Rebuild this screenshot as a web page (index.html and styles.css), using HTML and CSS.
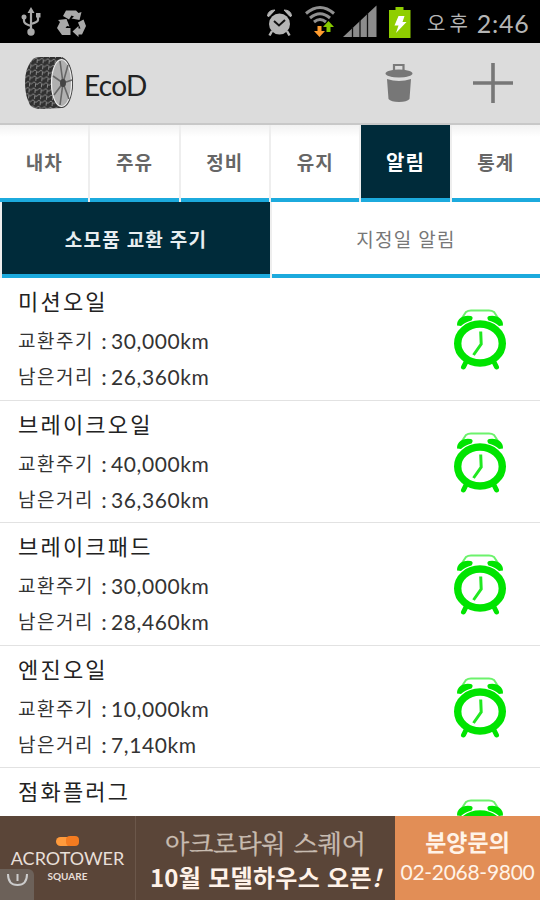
FILE: index.html
```html
<!DOCTYPE html>
<html lang="ko">
<head>
  <meta charset="UTF-8">
  <title>EcoD</title>
  <link rel="stylesheet" href="styles.css">
</head>
<body>

  <svg width="0" height="0" class="defs">
    <symbol id="alarm" viewBox="0 0 54 62">
      <path d="M9 9 L13 3 Q15 1.500 18 1.500 H36 Q39 1.500 41 3 L45 9" fill="none" stroke="#6cf26c" stroke-width="2"/>
      <path d="M4 16.500 Q3.500 12 8 8.500 Q12 6 18 7 Q21 8 18.500 11.500 Q12 13 8 17 Z M50 16.500 Q50.500 12 46 8.500 Q42 6 36 7 Q33 8 35.500 11.500 Q42 13 46 17 Z" fill="#00e400"/>
      <ellipse cx="27" cy="34.500" rx="22.300" ry="19.500" fill="none" stroke="#00e400" stroke-width="7.400"/>
      <path d="M13 53 L10.500 58 M41 53 L43.500 58" stroke="#00e400" stroke-width="5" stroke-linecap="round"/>
      <path d="M27.700 22.500 L28.200 35 L20.500 46" fill="none" stroke="#20e820" stroke-width="3"/>
    </symbol>
  </svg>

  <div class="phone">
    <div class="status">
      <svg class="left-icons" width="90" height="43" viewBox="0 0 90 43">
        <g fill="none" stroke="#aaa" stroke-width="2.200">
          <path d="M31 11 V33 M24 18 V21 Q24 24 31 26 M38 16 V20 Q38 22 31 24"/>
        </g>
        <path d="M31 7 L34.500 13 H27.500 Z M36 13 h4.500 v4.500 h-4.500 Z" fill="#aaa"/>
        <circle cx="24" cy="17" r="2.500" fill="#aaa"/>
        <circle cx="31" cy="32" r="3.700" fill="#aaa"/>
        <path d="M66 10.500 H76 L78.500 13 L81.500 12 L79.500 20 L71.500 18.500 L74 16.500 L71.500 15.500 L69 19.500 L63 16 Z" fill="#aaa"/>
        <path d="M58 20 L66.500 19 L69.500 26.500 L67 26 L65.500 28 H70.500 V35 H62 L57 28 L60 22 Z" fill="#aaa"/>
        <path d="M78 22.500 L83.500 19.500 L86 26 L82 34.500 H78.500 V37 L72.500 31.500 L78.500 26 V28.500 H80.500 Z" fill="#aaa"/>
      </svg>
      <svg class="right-icons" width="152" height="43" viewBox="260 0 152 43">
        <g stroke="#b5b5b5" fill="#b5b5b5">
          <circle cx="279.500" cy="24" r="10.500" stroke="none"/>
          <path d="M272 31 L269.500 35.500 M287 31 L289.500 35.500" stroke-width="2.500"/>
          <path d="M267.500 16 Q268 10 275 10 L269 16.500 Z M291.500 16 Q291 10 284 10 L290 16.500 Z" stroke-width="1"/>
          <path d="M274 21 L279 25.500 L285 20" stroke="#111" stroke-width="2" fill="none"/>
        </g>
        <g fill="none" stroke="#909090" stroke-width="3">
          <path d="M306 13.500 Q320 1.500 334 13.500"/>
          <path d="M310 18 Q320 9.500 330 18"/>
          <path d="M314 22 Q320 17 326 22"/>
        </g>
        <path d="M317.500 26 h4 v5 h3.500 l-5.500 6 l-5.500 -6 h3.500 Z" fill="#ff9c2e"/>
        <path d="M326.500 32 h4 v-5 h3.500 l-5.500 -6 l-5.500 6 h3.500 Z" fill="#86c800"/>
        <path d="M343 37 L376.500 5.500 V37 Z" fill="#8c8c8c"/>
        <path d="M352.500 27 V37 M360 20 V37 M367.500 13 V37" stroke="#111" stroke-width="1.300"/>
        <path d="M389 10 H395.500 V7 H403.500 V10 H410.500 V38 H389 Z" fill="#8fce00"/>
        <path d="M398.500 16 H404.500 L402.500 22 H406.500 L396 33 L398.500 25.500 H394.500 Z" fill="#fff"/>
      </svg>
      <div class="clock"><span class="ampm">오후</span><span class="time">2:46</span></div>
    </div>

    <div class="header">
      <svg class="tire" width="50" height="54" viewBox="0 0 50 54">
        <defs>
          <pattern id="tread" width="6" height="6" patternUnits="userSpaceOnUse" patternTransform="rotate(4)">
            <rect width="6" height="6" fill="#303030"/>
            <path d="M0 1 L3 3.500 L6 1 M1.500 3 V6" fill="none" stroke="#8a8a8a" stroke-width="1"/>
          </pattern>
        </defs>
        <path d="M8 4 Q10 1 17 1 H38 Q48 6 49 27 Q48 47 38 52 L17 53 Q9 53 6 49 Q1 40 1 27 Q1 12 8 4 Z" fill="url(#tread)"/>
        <ellipse cx="38" cy="27" rx="11" ry="25" fill="#444"/>
        <ellipse cx="37.500" cy="27" rx="10" ry="23.500" fill="#b0b0b0" stroke="#eee" stroke-width="1.200"/>
        <path d="M39 27 L36 5 M39 27 L44 9 M39 27 L48 24 M39 27 L45 43 M39 27 L36 49 M39 27 L30 39 M39 27 L29 20" stroke="#666" stroke-width="1.600"/>
        <ellipse cx="39" cy="27" rx="3" ry="4" fill="#444"/>
      </svg>
      <h1>EcoD</h1>
      <svg class="trash" width="28" height="40" viewBox="0 0 28 40">
        <path d="M9 7 V2 H18.500 V7" fill="none" stroke="#7a7a7a" stroke-width="2.200"/>
        <ellipse cx="14" cy="10.500" rx="13.500" ry="4" fill="#777"/>
        <path d="M2 16 Q14 20 26 16 L24.500 36 Q22 39 14 39 Q6 39 3.500 36 Z" fill="#777"/>
      </svg>
      <svg class="plus" width="40" height="40" viewBox="0 0 40 40">
        <path d="M20 0 V40 M0 20 H40" stroke="#777" stroke-width="3.600"/>
      </svg>
    </div>

    <div class="tabs">
      <div class="tab">내차</div>
      <div class="tab">주유</div>
      <div class="tab">정비</div>
      <div class="tab">유지</div>
      <div class="tab active">알림</div>
      <div class="tab">통계</div>
    </div>

    <div class="subtabs">
      <div class="subtab active">소모품 교환 주기</div>
      <div class="subtab">지정일 알림</div>
    </div>

    <div class="list">
      <div class="item">
        <div class="info">
          <h2>미션오일</h2>
          <p><span class="label">교환주기</span><span class="colon">:</span><span class="km">30,000km</span></p>
          <p><span class="label">남은거리</span><span class="colon">:</span><span class="km">26,360km</span></p>
        </div>
        <svg class="alarm"><use href="#alarm"/></svg>
      </div>
      <div class="item">
        <div class="info">
          <h2>브레이크오일</h2>
          <p><span class="label">교환주기</span><span class="colon">:</span><span class="km">40,000km</span></p>
          <p><span class="label">남은거리</span><span class="colon">:</span><span class="km">36,360km</span></p>
        </div>
        <svg class="alarm"><use href="#alarm"/></svg>
      </div>
      <div class="item">
        <div class="info">
          <h2>브레이크패드</h2>
          <p><span class="label">교환주기</span><span class="colon">:</span><span class="km">30,000km</span></p>
          <p><span class="label">남은거리</span><span class="colon">:</span><span class="km">28,460km</span></p>
        </div>
        <svg class="alarm"><use href="#alarm"/></svg>
      </div>
      <div class="item">
        <div class="info">
          <h2>엔진오일</h2>
          <p><span class="label">교환주기</span><span class="colon">:</span><span class="km">10,000km</span></p>
          <p><span class="label">남은거리</span><span class="colon">:</span><span class="km">7,140km</span></p>
        </div>
        <svg class="alarm"><use href="#alarm"/></svg>
      </div>
      <div class="item">
        <div class="info">
          <h2>점화플러그</h2>
        </div>
        <svg class="alarm"><use href="#alarm"/></svg>
      </div>
    </div>

    <div class="ad">
      <div class="brand">
        <svg width="24" height="11" viewBox="0 0 24 11">
          <rect x="0" y="1" width="15" height="9" rx="4.500" fill="#ff9a3c"/>
          <rect x="10" y="0" width="13" height="10" rx="4" fill="#f47b20"/>
        </svg>
        <div class="name">ACROTOWER</div>
        <div class="square">SQUARE</div>
        <div class="info-badge">
          <svg width="34" height="31" viewBox="0 0 34 31">
            <path d="M8 5 Q8 16 17.500 16 Q27 16 27 5" fill="none" stroke="#ccc" stroke-width="2"/>
            <path d="M17.500 5 V12" stroke="#ccc" stroke-width="2"/>
          </svg>
        </div>
      </div>
      <div class="copy">
        <div class="line1">아크로타워 스퀘어</div>
        <div class="line2">10월 모델하우스 오픈<i>!</i></div>
      </div>
      <div class="contact">
        <div class="ask">분양문의</div>
        <div class="tel">02-2068-9800</div>
      </div>
    </div>
  </div>

</body>
</html>
```
FILE: styles.css
```css
body {
  margin: 0;
  background: #fff;
  font-family: Lato, "Noto Sans CJK KR", sans-serif;
  color: #222;
}

.defs {
  display: block;
}

.phone {
  width: 540px;
  height: 900px;
  display: flex;
  flex-direction: column;
  overflow: hidden;
}

/* status bar */
.status {
  height: 43px;
  flex: none;
  display: flex;
  background: #000;
  color: #b5b5b5;
}

.right-icons {
  margin-left: 170px;
}

.clock {
  display: flex;
  align-items: center;
  margin-left: 15px;
  padding-top: 4px;
  white-space: nowrap;
}

.ampm {
  font-size: 20px;
  letter-spacing: 4px;
  line-height: 39px;
}

.time {
  margin-left: 5px;
  font-size: 25px;
  line-height: 39px;
  letter-spacing: 0.7px;
}

/* action bar */
.header {
  height: 82px;
  flex: none;
  box-sizing: border-box;
  display: flex;
  align-items: center;
  padding: 0 27px 0 24px;
  background: #dcdcdc;
  border-bottom: 2px solid #c8c8c8;
}

.header h1 {
  margin: 3px 0 0 10px;
  font-size: 28px;
  font-weight: normal;
  letter-spacing: -0.7px;
}

.trash {
  margin-left: auto;
  margin-right: 60px;
}

/* tabs */
.tabs,
.subtabs {
  display: flex;
  flex: none;
  gap: 2px;
  background: #eee;
}

.tabs {
  height: 77px;
}

.subtabs {
  height: 76px;
}

.tab,
.subtab {
  flex: 1;
  box-sizing: border-box;
  display: flex;
  align-items: center;
  justify-content: center;
  background: #fff;
  border-bottom: 4px solid #1caadd;
  white-space: nowrap;
}

.tab {
  font-size: 19px;
  font-weight: bold;
  color: #666;
  letter-spacing: 1px;
  background: linear-gradient(#f2f2f2, #fff 12px);
}

.subtab {
  font-size: 19px;
  letter-spacing: 1.2px;
  color: #777;
}

.tab.active {
  background: #002b3a;
  color: #fff;
  font-size: 20px;
}

.subtab.active {
  background: #002b3a;
  color: #e8eef0;
  font-weight: bold;
  margin-left: 2px;
}

/* list */
.list {
  flex: 1;
  min-height: 0;
  overflow: hidden;
}

.item {
  height: 122.600px;
  box-sizing: border-box;
  display: flex;
  justify-content: space-between;
  padding: 6px 33px 0 18px;
  border-bottom: 1px solid #e2e2e2;
}

.item h2 {
  margin: 0;
  font-size: 22px;
  line-height: 36px;
  font-weight: normal;
  letter-spacing: 2.200px;
}

.item p {
  margin: 0;
  display: flex;
  height: 36px;
  line-height: 36px;
  position: relative;
  top: 3px;
  color: #333;
}

.label {
  width: 79px;
  font-size: 19px;
  letter-spacing: 1.500px;
}

.colon {
  width: 14px;
  text-align: center;
  font-size: 22px;
}

.km {
  font-size: 21px;
  letter-spacing: 0.600px;
}

.alarm {
  width: 54px;
  height: 62px;
  margin-top: 25px;
}

/* ad banner */
.ad {
  height: 84px;
  flex: none;
  display: flex;
  background: #5a4538;
  color: #e8dfd8;
  white-space: nowrap;
}

.brand {
  width: 136px;
  box-sizing: border-box;
  position: relative;
  padding-top: 20px;
  text-align: center;
  border-right: 1px solid #6b574a;
}

.brand > svg {
  display: block;
  margin: 0 auto;
}

.name {
  font-size: 18px;
  line-height: 22px;
}

.square {
  margin-top: 1px;
  font-size: 10px;
  line-height: 12px;
  font-weight: bold;
}

.info-badge {
  position: absolute;
  left: 0;
  bottom: 0;
  width: 34px;
  height: 31px;
  background: #6c6159;
  border-top-right-radius: 6px;
}

.copy {
  width: 259px;
  padding-top: 7px;
  text-align: center;
}

.line1 {
  font-family: "Noto Serif CJK KR", "Noto Sans CJK KR", serif;
  font-size: 25px;
  line-height: 38px;
  color: #c8bcb1;
  -webkit-text-stroke: 0.4px #c8bcb1;
}

.line2 {
  font-family: "Noto Sans CJK KR", sans-serif;
  font-size: 24px;
  line-height: 32px;
  letter-spacing: 0.3px;
  font-weight: bold;
  color: #fff2e8;
}

.contact {
  flex: 1;
  padding-top: 11px;
  background: #e28e56;
  color: #fff3e8;
  text-align: center;
}

.ask {
  font-size: 23px;
  line-height: 31px;
  font-weight: bold;
}

.tel {
  font-size: 21px;
  line-height: 28px;
  letter-spacing: -0.3px;
}
```
